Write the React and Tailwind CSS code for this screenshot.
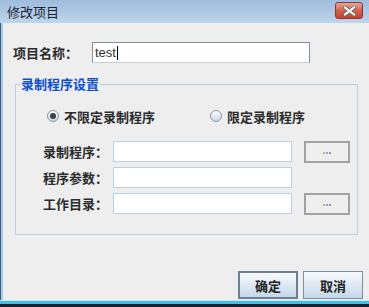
const cjk = { fontFamily: '"Noto Sans CJK SC", "Noto Sans", sans-serif' };

function Radio({ checked, label }) {
  return (
    <div className="flex items-center gap-[5px]">
      <div className="flex h-[12px] w-[12px] items-center justify-center rounded-full border border-[#8494a6] bg-gradient-to-b from-[#fdfdfd] to-[#c9d6e4]">
        {checked && <div className="h-[6px] w-[6px] rounded-full bg-[#3b3f45]" />}
      </div>
      <span className="text-[13px] font-bold leading-none text-[#2b2b2b]">{label}</span>
    </div>
  );
}

function FieldRow({ label, browse }) {
  return (
    <div className="flex h-[21px] items-center">
      <span className="w-[70px] text-[13px] font-bold leading-none text-[#2b2b2b]">{label}</span>
      <div className="h-[21px] w-[179px] border border-[#b9cfe4] bg-white" />
      {browse && (
        <div className="ml-[12px] flex h-[22px] w-[46px] items-center justify-center gap-px border-2 border-[#a2a2a2] bg-[#eeeeee] pt-[2px]">
          <span className="h-[2px] w-[2px] bg-[#c9a98a]" />
          <span className="h-[2px] w-[2px] bg-[#8fa6c4]" />
          <span className="h-[2px] w-[2px] bg-[#7f9ac0]" />
        </div>
      )}
    </div>
  );
}

export default function App() {
  return (
    <div className="flex h-[307px] w-[369px] flex-col overflow-hidden bg-[#eeeeee]" style={cjk}>
      <div className="flex h-[23px] items-center justify-between bg-gradient-to-b from-[#9fbcdc] to-[#bed5ec] pl-[7px] pr-[6px]">
        <span className="text-[13px] leading-none text-[#1a2430]">修改项目</span>
        <div className="mt-[-2px] flex h-[17px] w-[28px] items-center justify-center rounded-[3px] border border-[#8a3a33] bg-gradient-to-b from-[#e9a496] via-[#d1604f] to-[#c3442f]">
          <svg width="13" height="10" viewBox="0 0 13 10">
            <path d="M2 1.5 L11 8.5 M11 1.5 L2 8.5" stroke="#6a6a6a" strokeWidth="3.6" strokeLinecap="square" />
            <path d="M2 1.5 L11 8.5 M11 1.5 L2 8.5" stroke="#ffffff" strokeWidth="2" strokeLinecap="square" />
          </svg>
        </div>
      </div>

      <div className="flex flex-1 border-l border-[#3f5c79]">
        <div className="flex flex-1 flex-col border-l-2 border-[#a9cbea]">
          <div className="mt-[19px] flex h-[21px] items-center pl-[10px]">
            <span className="w-[79px] text-[13px] font-bold leading-none text-[#2b2b2b]">项目名称：</span>
            <div className="flex h-[21px] w-[218px] items-center border border-[#8090a2] border-b-[#c4cfdb] bg-white pl-[2px]">
              <span className="text-[13px] leading-none text-[#333333]" style={{ fontFamily: '"Liberation Sans", Arial, sans-serif' }}>test</span>
              <span className="ml-px h-[14px] w-px bg-black" />
            </div>
          </div>

          <div className="relative ml-[12px] mt-[21px] h-[151px] w-[343px] border border-[#b8cfe6]">
            <span className="absolute left-[4px] top-[-8px] bg-[#eeeeee] px-[1px] text-[13px] font-bold leading-none text-[#0b4fd0]">录制程序设置</span>
            <div className="mt-[21px] flex h-[20px] items-center pl-[31px]">
              <div className="w-[163px]">
                <Radio checked label="不限定录制程序" />
              </div>
              <Radio label="限定录制程序" />
            </div>
            <div className="mt-[15px] flex flex-col gap-[5px] pl-[27px]">
              <FieldRow label="录制程序：" browse />
              <FieldRow label="程序参数：" />
              <FieldRow label="工作目录：" browse />
            </div>
          </div>

          <div className="mb-px mt-auto flex justify-end gap-[5px] pr-[6px]">
            <div className="flex h-[28px] w-[60px] items-center justify-center border-2 border-[#6d7f90] bg-gradient-to-b from-[#f7fafd] to-[#c6d7e9]">
              <span className="text-[13px] font-bold leading-none text-[#222222]">确定</span>
            </div>
            <div className="flex h-[28px] w-[60px] items-center justify-center border border-[#7c8ea0] bg-gradient-to-b from-[#f7fafd] to-[#c6d7e9]">
              <span className="text-[13px] font-bold leading-none text-[#222222]">取消</span>
            </div>
          </div>
        </div>
      </div>

      <div className="h-px bg-[#d6e4f1]" />
      <div className="h-[3px] bg-[#36c3ec]" />
      <div className="h-[3px] bg-[#18232e]" />
    </div>
  );
}
